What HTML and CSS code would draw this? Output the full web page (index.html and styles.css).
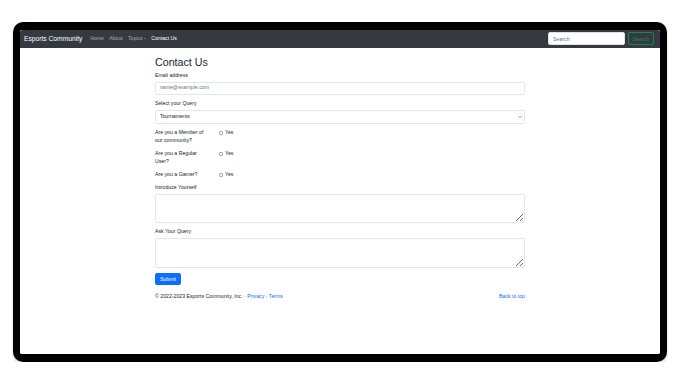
FILE: index.html
```html
<!DOCTYPE html>
<html lang="en">
<head>
    <meta charset="UTF-8">
    <meta name="viewport" content="width=device-width, initial-scale=1.0">
    <title>Esports Community - Contact Us</title>
    <link rel="stylesheet" href="styles.css">
</head>

<body>
    <div class="device">
        <div class="screen">
            <nav class="navbar">
                <div class="nav-left">
                    <a href="#" class="brand">Esports Community</a>
                    <ul class="nav-links">
                        <li><a href="#">Home</a></li>
                        <li><a href="#">About</a></li>
                        <li><a href="#" class="dropdown">Topics</a></li>
                        <li><a href="#" class="active">Contact Us</a></li>
                    </ul>
                </div>
                <form class="search">
                    <input type="search" placeholder="Search" class="search-input">
                    <button type="button" class="search-btn">Search</button>
                </form>
            </nav>

            <main class="content">
                <h1>Contact Us</h1>
                <form class="contact-form">
                    <div class="field">
                        <label for="email">Email address</label>
                        <input type="email" id="email" class="control" placeholder="name@example.com">
                    </div>

                    <div class="field">
                        <label for="query">Select your Query</label>
                        <div class="select-wrap">
                            <select id="query" class="control">
                                <option>Tournaments</option>
                                <option>Teams</option>
                                <option>Other</option>
                            </select>
                            <svg class="chevron" viewBox="0 0 16 16"><path d="M2 5l6 6 6-6" fill="none" stroke="#343a40" stroke-width="2" stroke-linecap="round" stroke-linejoin="round"/></svg>
                        </div>
                    </div>

                    <div class="check-row">
                        <div class="check-label">Are you a Member of our community?</div>
                        <label class="check"><input type="checkbox"> Yes</label>
                    </div>

                    <div class="check-row">
                        <div class="check-label">Are you a Regular User?</div>
                        <label class="check"><input type="checkbox"> Yes</label>
                    </div>

                    <div class="check-row">
                        <div class="check-label">Are you a Gamer?</div>
                        <label class="check"><input type="checkbox"> Yes</label>
                    </div>

                    <div class="field">
                        <label for="intro">Introduce Yourself</label>
                        <textarea id="intro" class="control" rows="3"></textarea>
                    </div>

                    <div class="field">
                        <label for="ask">Ask Your Query</label>
                        <textarea id="ask" class="control" rows="3"></textarea>
                    </div>

                    <button type="submit" class="submit-btn">Submit</button>
                </form>

                <footer class="footer">
                    <p>&copy; 2022-2023 Esports Community, Inc. &middot; <a href="#">Privacy</a> &middot; <a href="#">Terms</a></p>
                    <a href="#">Back to top</a>
                </footer>
            </main>
        </div>
    </div>
</body>
</html>
```

FILE: styles.css
```css
* {
    margin: 0;
    padding: 0;
    box-sizing: border-box;
    font-family: "Liberation Sans", Arial, sans-serif;
}

body {
    background-color: #fff;
    color: #212529;
    font-size: 5.2px;
    line-height: 1.5;
}

a {
    color: #0d6efd;
    text-decoration: none;
}

/* laptop frame */
.device {
    margin: 22px 13px 0;
    height: 340px;
    border-style: solid;
    border-color: #000;
    border-width: 8px 7px;
    border-radius: 10px;
    box-shadow: 0 2px 3px rgba(0, 0, 0, 0.15);
    overflow: hidden;
}

.screen {
    height: 100%;
    background-color: #fff;
}

/* navbar */
.navbar {
    display: flex;
    justify-content: space-between;
    align-items: center;
    height: 17.5px;
    padding: 0 6px 0 4px;
    background-color: #343a40;
}

.nav-left {
    display: flex;
    align-items: center;
}

.brand {
    color: #fff;
    font-size: 6.7px;
    margin-right: 5.2px;
}

.nav-links {
    display: flex;
    list-style: none;
}

.nav-links a {
    display: block;
    padding: 0 2.6px;
    color: rgba(255, 255, 255, 0.55);
}

.nav-links a.active {
    color: #fff;
}

.dropdown::after {
    content: "";
    display: inline-block;
    margin-left: 1.4px;
    vertical-align: 0.25em;
    border-top: 1.6px solid;
    border-left: 1.6px solid transparent;
    border-right: 1.6px solid transparent;
}

.search {
    display: flex;
    align-items: center;
}

.search-input {
    width: 77px;
    height: 13px;
    margin-right: 2.6px;
    padding: 0 3.9px;
    border: 1px solid #dee2e6;
    border-radius: 2px;
    font-size: 5.2px;
    color: #212529;
    background-color: #fff;
    outline: none;
}

.search-input::placeholder {
    color: #6c757d;
}

.search-btn {
    height: 13px;
    padding: 0 3.9px;
    border: 1px solid #198754;
    border-radius: 2px;
    background: transparent;
    color: #198754;
    font-size: 5.2px;
}

/* contact form */
.content {
    width: 370px;
    margin: 0 auto;
    padding-top: 8.8px;
}

h1 {
    font-size: 10.7px;
    font-weight: 500;
    line-height: 1.2;
    margin-bottom: 2.4px;
}

.field {
    margin-bottom: 5px;
}

.field label {
    display: block;
    margin-bottom: 2.2px;
}

.control {
    display: block;
    width: 100%;
    padding: 1.95px 3.9px;
    border: 1px solid #e3e6ea;
    border-radius: 2px;
    font-size: 5.2px;
    line-height: 1.5;
    color: #212529;
    background-color: #fff;
    outline: none;
}

.control::placeholder {
    color: #6c757d;
}

textarea.control {
    height: 29.3px;
    resize: vertical;
}

.select-wrap {
    position: relative;
}

select.control {
    appearance: none;
    -webkit-appearance: none;
}

.chevron {
    position: absolute;
    right: 3px;
    top: 4.6px;
    width: 4px;
    height: 4px;
}

.check-row {
    display: grid;
    grid-template-columns: 54px 1fr;
    column-gap: 10px;
    margin-bottom: 5.4px;
}

.check {
    display: flex;
    align-items: center;
    gap: 1.8px;
    height: 7.8px;
}

.check input {
    appearance: none;
    -webkit-appearance: none;
    width: 4.2px;
    height: 4.2px;
    border: 0.6px solid #a9aeb3;
    border-radius: 1px;
    background-color: #fff;
}

.submit-btn {
    height: 12.4px;
    padding: 0 3.9px;
    border: 1px solid #0d6efd;
    border-radius: 2px;
    background-color: #0d6efd;
    color: #fff;
    font-size: 5.2px;
}

.footer {
    display: flex;
    justify-content: space-between;
    align-items: center;
    margin-top: 8px;
    color: #6c757d;
}

.footer p {
    color: #212529;
}
```
